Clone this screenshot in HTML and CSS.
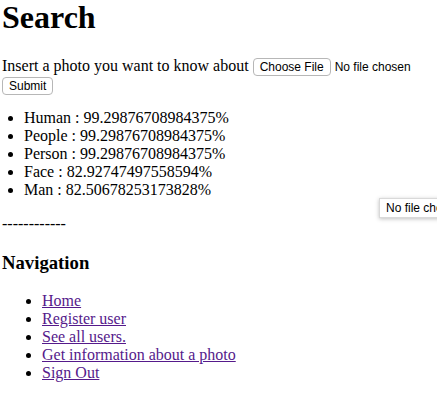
FILE: index.html
```html
<!DOCTYPE html>
<html>
<head>
<meta charset="utf-8">
<link rel="stylesheet" href="styles.css">
</head>
<body>
<h1 class="title">Search</h1>
<form class="upload">
Insert a photo you want to know about <span class="file"><span class="btn">Choose File</span> <span class="file-name">No file chosen</span></span><br>
<span class="btn">Submit</span>
</form>
<ul class="results">
<li>Human : 99.29876708984375%</li>
<li>People : 99.29876708984375%</li>
<li>Person : 99.29876708984375%</li>
<li>Face : 82.92747497558594%</li>
<li>Man : 82.50678253173828%</li>
</ul>
<p class="sep">------------</p>
<h3 class="nav-title">Navigation</h3>
<ul class="nav">
<li><a href="#">Home</a></li>
<li><a href="#">Register user</a></li>
<li><a href="#">See all users.</a></li>
<li><a href="#">Get information about a photo</a></li>
<li><a href="#">Sign Out</a></li>
</ul>
<div class="tooltip">No file chosen</div>
</body>
</html>
```
FILE: styles.css
```css
html, body {
  margin: 0;
  padding: 0;
}
body {
  position: relative;
  padding-left: 2px;
  font-family: "Liberation Serif", "Times New Roman", serif;
  font-size: 16px;
  color: #000;
  background: #fff;
  overflow: hidden;
  height: 400px;
}
.title {
  font-size: 32px;
  font-weight: bold;
  margin: -1px 0 21px 0;
}
.upload {
  margin: 0;
}
.btn {
  display: inline-block;
  font-family: "Liberation Sans", Arial, sans-serif;
  font-size: 12px;
  line-height: 14px;
  padding: 1px 6px;
  border: 1px solid #b7b7b7;
  border-radius: 4px;
  background: #fff;
  color: #000;
}
.file-name {
  font-family: "Liberation Sans", Arial, sans-serif;
  font-size: 12px;
}
.results {
  margin: 14px 0 16px 0;
  padding-left: 22px;
}
.sep {
  margin: 16px 0;
}
.nav-title {
  font-size: 18.72px;
  margin: 18.72px 0;
}
.nav {
  margin: 16px 0;
  padding-left: 40px;
}
.nav a {
  color: #551a8b;
}
.tooltip {
  position: absolute;
  left: 379px;
  top: 198px;
  font-family: "Liberation Sans", Arial, sans-serif;
  font-size: 12px;
  line-height: 16px;
  padding: 1px 6px;
  background: #fff;
  border: 1px solid #d9d9d9;
  box-shadow: 0 1px 4px rgba(0,0,0,0.25);
  white-space: nowrap;
}
```
